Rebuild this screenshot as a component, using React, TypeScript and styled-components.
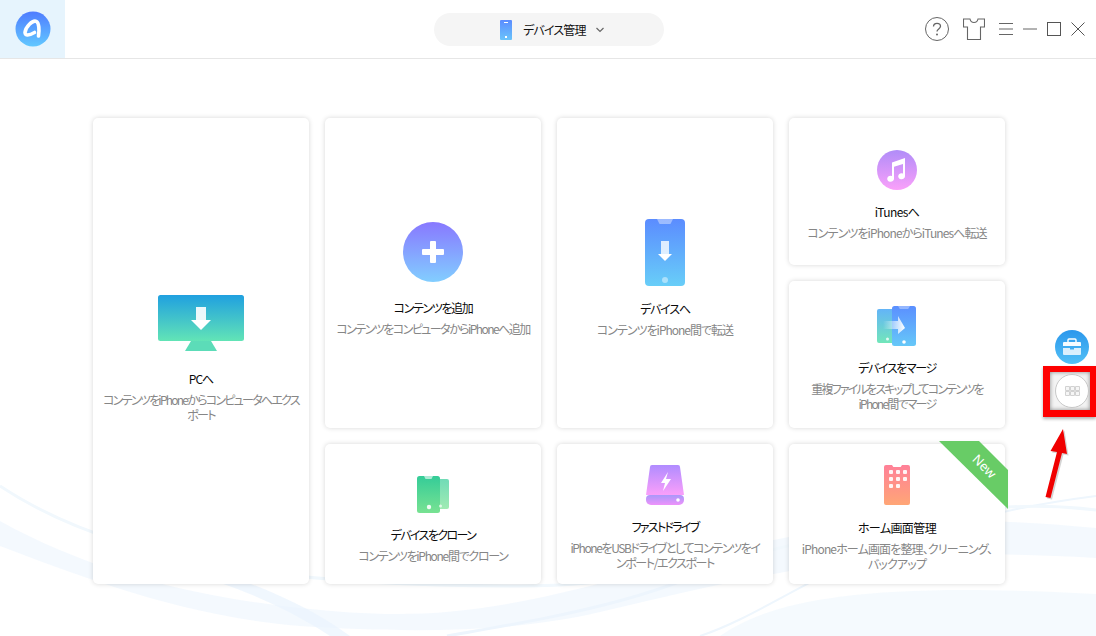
import React from 'react';
import styled, {createGlobalStyle} from 'styled-components';

const GlobalStyle = createGlobalStyle`
  html, body {
    margin: 0;
    padding: 0;
    background: #fff;
  }
  body {
    font-family: "Noto Sans CJK JP", "Noto Sans", sans-serif;
    font-feature-settings: "palt";
    font-size: 12px;
  }
`;

const Page = styled.div`
  position: relative;
  width: 1096px;
  height: 636px;
  overflow: hidden;
  background: #fff;
`;

const Waves = styled.svg`
  position: absolute;
  left: 0;
  bottom: 0;
`;

const Header = styled.header`
  position: relative;
  display: grid;
  grid-template-columns: 65px 369px 230px 1fr;
  align-items: center;
  height: 58px;
  border-bottom: 1px solid #e6e6e6;
  background: #fff;
`;

const LogoBox = styled.div`
  display: flex;
  align-items: center;
  justify-content: center;
  height: 58px;
  background: #e6f4fd;
`;

const DeviceSwitch = styled.div`
  grid-column: 3;
  display: flex;
  align-items: center;
  height: 33px;
  margin-top: 1px;
  padding-left: 66px;
  box-sizing: border-box;
  border-radius: 17px;
  background: #f5f5f5;
  color: #111;
  line-height: 33px;
`;

const SwitchLabel = styled.span`
  margin: 0 10px 0 11px;
  letter-spacing: -0.8px;
  white-space: nowrap;
`;

const WindowTools = styled.div`
  display: flex;
  align-items: center;
  height: 58px;
  padding-left: 261px;
`;

const ToolIcon = styled.svg<{$gap: number}>`
  display: block;
  flex: none;
  margin-right: ${props => props.$gap}px;
`;

const Board = styled.main`
  position: relative;
  display: grid;
  grid-template-columns: repeat(4, 216px);
  grid-template-rows: 147px 147px 140px;
  gap: 16px;
  padding: 59px 0 0 93px;
`;

const Card = styled.section<{$area: string; $pad: number}>`
  position: relative;
  grid-area: ${props => props.$area};
  display: flex;
  flex-direction: column;
  align-items: center;
  justify-content: center;
  box-sizing: border-box;
  padding-top: ${props => props.$pad}px;
  border-radius: 5px;
  background: #fff;
  box-shadow: 0 0 5px rgba(0, 0, 0, 0.16);
  text-align: center;
`;

const IconSlot = styled.div<{$gap: number}>`
  display: flex;
  margin-bottom: ${props => props.$gap}px;
`;

const Title = styled.h3<{$track: number}>`
  margin: 0 0 6px;
  color: #0a0a0a;
  font-size: 12px;
  font-weight: 400;
  line-height: 15px;
  letter-spacing: ${props => props.$track}px;
  white-space: nowrap;
`;

const Desc = styled.p<{$track: number}>`
  margin: 0;
  color: #868686;
  font-size: 12px;
  line-height: 15px;
  letter-spacing: ${props => props.$track}px;
  white-space: nowrap;
`;

const Ribbon = styled.div`
  position: absolute;
  top: -3px;
  right: -3px;
  width: 69px;
  height: 68px;
  background: #68cc66;
  clip-path: polygon(0 0, 40px 0, 69px 29px, 69px 68px);
`;

const RibbonText = styled.span`
  position: absolute;
  top: 17px;
  left: 32px;
  color: #fff;
  font-family: "Noto Sans", sans-serif;
  font-size: 13px;
  line-height: 16px;
  transform: rotate(45deg);
`;

const SideDock = styled.div`
  position: absolute;
  top: 330px;
  left: 1055px;
`;

const AppsFrame = styled.div`
  position: absolute;
  top: 366px;
  left: 1043px;
  display: flex;
  align-items: center;
  justify-content: flex-end;
  box-sizing: border-box;
  width: 53px;
  height: 51px;
  padding-right: 1px;
  border: solid #fe0000;
  border-width: 6px 6px 7px 7px;
  background: #f3f3f3;
  box-shadow: inset 0 0 4px rgba(0, 0, 0, 0.45), 0 2px 3px rgba(0, 0, 0, 0.3);
`;

const AppsButton = styled.div`
  display: flex;
  align-items: center;
  justify-content: center;
  box-sizing: border-box;
  width: 34px;
  height: 34px;
  border: 1px solid #c8c8c8;
  border-radius: 50%;
  background: #fff;
`;

const Arrow = styled.svg`
  position: absolute;
  top: 425px;
  left: 1040px;
`;

const PC = () => (
  <svg width="86" height="56" viewBox="0 0 86 56">
    <defs>
      <linearGradient id="pc" x1="0" y1="0" x2="0" y2="1">
        <stop offset="0" stopColor="#20a0e0" />
        <stop offset="1" stopColor="#62e4b6" />
      </linearGradient>
    </defs>
    <rect width="86" height="46" rx="2.5" fill="url(#pc)" />
    <path d="M33 46h20l6 10H27z" fill="#5cdcb8" />
    <path d="M38 12h10v13h-10z" fill="#fff" opacity="0.9" />
    <path d="M33 25h20L43 35z" fill="#fff" />
  </svg>
);

const Plus = () => (
  <svg width="60" height="60" viewBox="0 0 60 60">
    <defs>
      <linearGradient id="add" x1="0" y1="0" x2="0" y2="1">
        <stop offset="0" stopColor="#8878ff" />
        <stop offset="1" stopColor="#82ceff" />
      </linearGradient>
    </defs>
    <circle cx="30" cy="30" r="30" fill="url(#add)" />
    <path d="M27 20a1 1 0 0 1 1-1h4a1 1 0 0 1 1 1v7h7a1 1 0 0 1 1 1v4a1 1 0 0 1-1 1h-7v7a1 1 0 0 1-1 1h-4a1 1 0 0 1-1-1v-7h-7a1 1 0 0 1-1-1v-4a1 1 0 0 1 1-1h7z" fill="#fff" />
  </svg>
);

const PhoneDown = () => (
  <svg width="40" height="67" viewBox="0 0 40 67">
    <defs>
      <linearGradient id="dev" x1="0" y1="0" x2="0" y2="1">
        <stop offset="0" stopColor="#5b8cff" />
        <stop offset="1" stopColor="#68cef8" />
      </linearGradient>
    </defs>
    <rect width="40" height="67" rx="4" fill="url(#dev)" />
    <path d="M12 0h16l-2 4a1.5 1.5 0 0 1-1 1H15a1.5 1.5 0 0 1-1-1z" fill="#fff" opacity="0.4" />
    <path d="M16 22h8v13h-8z" fill="#fff" opacity="0.8" />
    <path d="M13 35h14l-7 7z" fill="#fff" />
    <circle cx="20" cy="61" r="3" fill="#fff" opacity="0.45" />
  </svg>
);

const ITunes = () => (
  <svg width="40" height="40" viewBox="0 0 40 40">
    <defs>
      <linearGradient id="tunes" x1="0" y1="0" x2="0" y2="1">
        <stop offset="0" stopColor="#b08cf8" />
        <stop offset="1" stopColor="#faa0fa" />
      </linearGradient>
    </defs>
    <circle cx="20" cy="20" r="20" fill="url(#tunes)" />
    <path d="M15 12.5 28 8v18.2a3.4 3 0 1 1-2-2.7V14l-9 2.8V28.700a3.4 3 0 1 1-2-2.700z" fill="#fff" />
  </svg>
);

const Merge = () => (
  <svg width="40" height="40" viewBox="0 0 40 40">
    <defs>
      <linearGradient id="mergeBack" x1="0" y1="0" x2="0" y2="1">
        <stop offset="0" stopColor="#63b4f8" />
        <stop offset="1" stopColor="#72e6ba" />
      </linearGradient>
      <linearGradient id="mergeFront" x1="0" y1="0" x2="0" y2="1">
        <stop offset="0" stopColor="#5b8fff" />
        <stop offset="1" stopColor="#66c8f8" />
      </linearGradient>
      <linearGradient id="mergeArrow" x1="0" y1="0" x2="1" y2="0">
        <stop offset="0" stopColor="#fff" stopOpacity="0" />
        <stop offset="1" stopColor="#fff" />
      </linearGradient>
    </defs>
    <rect y="3" width="22" height="34" rx="2" fill="url(#mergeBack)" />
    <circle cx="10.500" cy="33" r="1.500" fill="#fff" opacity="0.8" />
    <rect x="15" width="24" height="40" rx="2.500" fill="url(#mergeFront)" />
    <path d="M21 0h12l-1.500 2.500a1 1 0 0 1-1 .5h-7a1 1 0 0 1-1-.5z" fill="#fff" opacity="0.35" />
    <circle cx="27" cy="36" r="1.800" fill="#fff" />
    <path d="M6 15h15v-5l7 12-7 6v-5H6z" fill="url(#mergeArrow)" />
  </svg>
);

const Clone = () => (
  <svg width="32" height="37" viewBox="0 0 32 37">
    <defs>
      <linearGradient id="cloneFront" x1="0" y1="0" x2="0" y2="1">
        <stop offset="0" stopColor="#34cc98" />
        <stop offset="1" stopColor="#78e292" />
      </linearGradient>
    </defs>
    <rect x="18" y="3" width="14" height="30" rx="2" fill="url(#cloneFront)" opacity="0.7" />
    <rect width="23" height="37" rx="2.500" fill="url(#cloneFront)" />
    <path d="M7 0h9l-1 2a1 1 0 0 1-1 1H9a1 1 0 0 1-1-1z" fill="#fff" opacity="0.6" />
    <circle cx="12" cy="31" r="2.200" fill="#fff" opacity="0.9" />
    <circle cx="23.500" cy="30" r="1.500" fill="#fff" opacity="0.7" />
  </svg>
);

const Drive = () => (
  <svg width="38" height="40" viewBox="0 0 38 40">
    <defs>
      <linearGradient id="driveTop" x1="0" y1="0" x2="0" y2="1">
        <stop offset="0" stopColor="#b08cff" />
        <stop offset="1" stopColor="#fa9ffa" />
      </linearGradient>
      <linearGradient id="driveBase" x1="0" y1="0" x2="0" y2="1">
        <stop offset="0" stopColor="#a998fa" />
        <stop offset="1" stopColor="#ee92fa" />
      </linearGradient>
    </defs>
    <path d="M6 0h26a2 2 0 0 1 2 2l4 28H0L4 2a2 2 0 0 1 2-2z" fill="url(#driveTop)" />
    <path d="M4 30h30a4 4 0 0 1 4 4v1a5 5 0 0 1-5 5H5a5 5 0 0 1-5-5v-1a4 4 0 0 1 4-4z" fill="url(#driveBase)" />
    <circle cx="32" cy="35" r="1.800" fill="#fff" />
    <path d="M22 7l-7 11h4l-2 8 8-12h-5z" fill="#fff" />
  </svg>
);

const HomeGrid = () => (
  <svg width="26" height="40" viewBox="0 0 26 40">
    <defs>
      <linearGradient id="home" x1="0" y1="0" x2="0" y2="1">
        <stop offset="0" stopColor="#ff8098" />
        <stop offset="1" stopColor="#ffa676" />
      </linearGradient>
    </defs>
    <path d="M2 0h6l1 1.500a1 1 0 0 0 1 .5h6a1 1 0 0 0 1-.5L18 0h6a2 2 0 0 1 2 2v36a2 2 0 0 1-2 2H2a2 2 0 0 1-2-2V2a2 2 0 0 1 2-2z" fill="url(#home)" />
    {[5, 12, 19].map(x =>
      [5, 12, 19].map(y =>
        x === 19 && y === 19 ? null : <rect key={`${x}-${y}`} x={x} y={y} width="4" height="4" rx="1" fill="#fff" opacity="0.9" />
      )
    )}
  </svg>
);

const cards = [
  {area: '1 / 1 / 4 / 2', pad: 14, gap: 20, track: -1, descTrack: -1.75, icon: <PC />, title: 'PCへ', desc: <>コンテンツをiPhoneからコンピュータへエクス<br />ポート</>},
  {area: '1 / 2 / 3 / 3', pad: 12, gap: 18, track: -1.4, descTrack: -1.55, icon: <Plus />, title: 'コンテンツを追加', desc: 'コンテンツをコンピュータからiPhoneへ追加'},
  {area: '1 / 3 / 3 / 4', pad: 10, gap: 15, track: -1.2, descTrack: -1, icon: <PhoneDown />, title: 'デバイスへ', desc: 'コンテンツをiPhone間で転送'},
  {area: '1 / 4 / 2 / 5', pad: 7, gap: 14, track: -0.6, descTrack: -0.9, icon: <ITunes />, title: 'iTunesへ', desc: 'コンテンツをiPhoneからiTunesへ転送'},
  {area: '2 / 4 / 3 / 5', pad: 7, gap: 14, track: -1.4, descTrack: -1.8, icon: <Merge />, title: 'デバイスをマージ', desc: <>重複ファイルをスキップしてコンテンツを<br />iPhone間でマージ</>},
  {area: '3 / 2 / 4 / 3', pad: 10, gap: 14, track: -1.6, descTrack: -1.3, icon: <Clone />, title: 'デバイスをクローン', desc: 'コンテンツをiPhone間でクローン'},
  {area: '3 / 3 / 4 / 4', pad: 7, gap: 14, track: -1.75, descTrack: -1.4, icon: <Drive />, title: 'ファストドライブ', desc: <>iPhoneをUSBドライブとしてコンテンツをイ<br />ンポート/エクスポート</>},
  {area: '3 / 4 / 4 / 5', pad: 8, gap: 15, track: -0.6, descTrack: -0.85, icon: <HomeGrid />, title: 'ホーム画面管理', desc: <>iPhoneホーム画面を整理、クリーニング、<br />バックアップ</>, isNew: true},
];

function App() {
  return (
    <Page>
      <GlobalStyle />
      <Waves width="1096" height="170" viewBox="0 0 1096 170">
        <path d="M0 55C90 105 190 130 300 142S480 150 620 112 880 40 1096 62V92C880 78 760 108 600 146 520 165 420 168 300 160 180 150 80 110 0 80z" fill="#f1f8fe" opacity="0.8" />
        <path d="M720 170C770 135 860 115 1096 128V170z" fill="#f3f9fe" opacity="0.8" />
        <path d="M215 115C260 130 300 150 330 170H350C320 148 280 128 235 112z" fill="#eaf3fd" opacity="0.7" />
        <path d="M447 170C560 150 660 135 770 75" fill="none" stroke="#edf5fd" strokeWidth="3" />
        <path d="M700 170C790 140 860 60 1096 30" fill="none" stroke="#eef6fd" strokeWidth="2" />
        <path d="M0 20C120 100 300 120 520 120S900 20 1096 44" fill="none" stroke="#f1f8fd" strokeWidth="3" />
      </Waves>
      <Header>
        <LogoBox>
          <svg width="36" height="36" viewBox="0 0 36 36">
            <defs>
              <linearGradient id="logo" x1="0" y1="0" x2="0" y2="1">
                <stop offset="0" stopColor="#4f7cff" />
                <stop offset="1" stopColor="#62c8ff" />
              </linearGradient>
            </defs>
            <circle cx="18" cy="18" r="17.500" fill="url(#logo)" />
            <path d="M23.500 25C24.500 19 24 12 21.500 10.500 17.500 8.500 10.500 16 10 21.500 10 25 14 24.500 19.500 21.500" fill="none" stroke="#fff" strokeWidth="3.600" strokeLinecap="round" />
          </svg>
        </LogoBox>
        <DeviceSwitch>
          <svg width="12" height="20" viewBox="0 0 12 20">
            <defs>
              <linearGradient id="mini" x1="0" y1="0" x2="0" y2="1">
                <stop offset="0" stopColor="#5b8cff" />
                <stop offset="1" stopColor="#6ac4fa" />
              </linearGradient>
            </defs>
            <rect width="12" height="20" rx="1" fill="url(#mini)" />
            <rect x="4" y="2" width="4" height="1" fill="#fff" />
            <rect x="5" y="16" width="2" height="2" fill="#fff" />
          </svg>
          <SwitchLabel>デバイス管理</SwitchLabel>
          <svg width="8" height="6" viewBox="0 0 8 6">
            <path d="M.5 1 4 4.500 7.500 1" fill="none" stroke="#666" strokeWidth="1.200" />
          </svg>
        </DeviceSwitch>
        <WindowTools>
          <ToolIcon $gap={14} width="24" height="24" viewBox="0 0 24 24">
            <circle cx="12" cy="12" r="11.500" fill="none" stroke="#666" />
            <path d="M8.500 9.500C8.500 7.500 10 6.300 12 6.300s3.500 1.200 3.500 3c0 2.600-3.500 2.600-3.500 5.200" fill="none" stroke="#666" strokeWidth="1.300" />
            <circle cx="12" cy="17.500" r="1" fill="#666" />
          </ToolIcon>
          <ToolIcon $gap={14} width="22" height="22" viewBox="0 0 22 22">
            <path d="M.5 1H7C7.500 3.500 9 4.500 11 4.500S14.500 3.500 15 1H21.500V9H17.500V21.500H4.500V9H.5z" fill="none" stroke="#666" strokeWidth="1.100" />
          </ToolIcon>
          <ToolIcon $gap={10} width="14" height="12" viewBox="0 0 14 12">
            <path d="M0 .5H14M0 6H14M0 11.500H14" stroke="#666" />
          </ToolIcon>
          <ToolIcon $gap={10} width="14" height="2" viewBox="0 0 14 2">
            <path d="M0 1H14" stroke="#666" />
          </ToolIcon>
          <ToolIcon $gap={10} width="14" height="14" viewBox="0 0 14 14">
            <rect x=".5" y=".5" width="13" height="13" fill="none" stroke="#555" />
          </ToolIcon>
          <ToolIcon $gap={0} width="14" height="14" viewBox="0 0 14 14">
            <path d="M.5.500 13.500 13.500M13.500.500 .5 13.500" stroke="#555" />
          </ToolIcon>
        </WindowTools>
      </Header>
      <Board>
        {cards.map(card => (
          <Card key={card.title} $area={card.area} $pad={card.pad}>
            <IconSlot $gap={card.gap}>{card.icon}</IconSlot>
            <Title $track={card.track}>{card.title}</Title>
            <Desc $track={card.descTrack}>{card.desc}</Desc>
            {card.isNew && (
              <Ribbon>
                <RibbonText>New</RibbonText>
              </Ribbon>
            )}
          </Card>
        ))}
      </Board>
      <SideDock>
        <svg width="34" height="34" viewBox="0 0 34 34">
          <defs>
            <linearGradient id="dock" x1="0" y1="0" x2="0" y2="1">
              <stop offset="0" stopColor="#2b97ec" />
              <stop offset="1" stopColor="#52c0f6" />
            </linearGradient>
          </defs>
          <circle cx="17" cy="17" r="17" fill="url(#dock)" />
          <path d="M13 12v-2a1 1 0 0 1 1-1h6a1 1 0 0 1 1 1v2" fill="none" stroke="#fff" strokeWidth="1.400" />
          <path d="M9 12h16a1 1 0 0 1 1 1v3H8v-3a1 1 0 0 1 1-1z" fill="#fff" opacity="0.95" />
          <path d="M8 18h7v1.500h4V18h7v6a1 1 0 0 1-1 1H9a1 1 0 0 1-1-1z" fill="#fff" opacity="0.8" />
        </svg>
      </SideDock>
      <AppsFrame>
        <AppsButton>
          <svg width="15" height="10" viewBox="0 0 15 10">
            <path d="M.5.500h4v4h-4zM5.500.500h4v4h-4zM10.500.500h4v4h-4zM.5 5.500h4v4h-4zM5.500 5.500h4v4h-4zM10.500 5.500h4v4h-4z" fill="#f6f6f6" stroke="#d2d2d2" />
          </svg>
        </AppsButton>
      </AppsFrame>
      <Arrow width="32" height="78" viewBox="0 0 32 78">
        <path d="M23 4 10.500 26 17 27 5.500 72 10.500 73 22 28 27 29z" fill="#aaa" opacity="0.5" transform="translate(1.500 1.500)" />
        <path d="M23 4 10.500 26 17 27 5.500 72 10.500 73 22 28 27 29z" fill="#f00000" />
      </Arrow>
    </Page>
  );
}

export default App;
